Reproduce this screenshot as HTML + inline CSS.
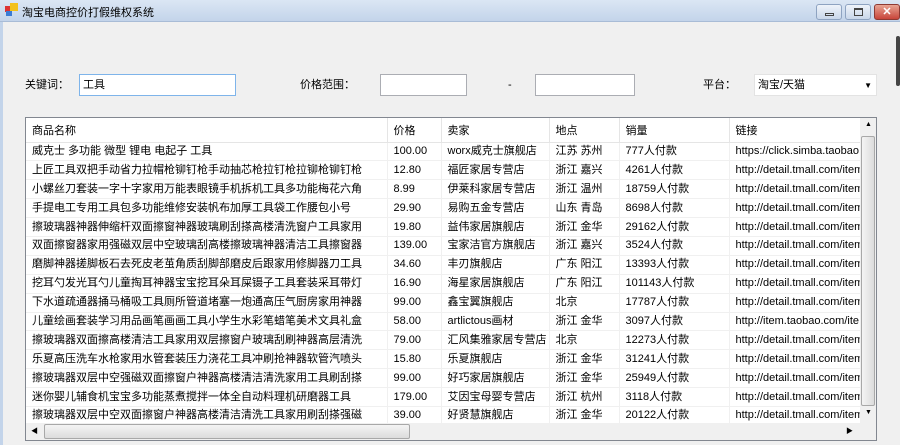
<!DOCTYPE html>
<html><head><meta charset="utf-8"><style>
*{margin:0;padding:0;box-sizing:border-box}
body{width:900px;height:445px;overflow:hidden;background:#f0f0f0;font-family:"Liberation Sans","Noto Sans CJK SC",sans-serif;font-size:11px;color:#000;position:relative}
.title{position:absolute;left:0;top:0;width:900px;height:22px;background:linear-gradient(#dbe6f4,#c3d4ea);border-bottom:1px solid #a9bcd6}
.title span{position:absolute;left:22px;top:4px;font-size:11px}
.lb{position:absolute;left:0;top:22px;width:3px;height:423px;background:#c3d4ea}
.btn{position:absolute;top:4px;height:16px;border:1px solid #8ea3c1;border-radius:3px;background:linear-gradient(#eef3fa,#c9d7ea)}
.lab{position:absolute;font-size:11px;line-height:14px}
.inp{position:absolute;background:#fff;border:1px solid #abadb3;line-height:14px}
table{border-collapse:collapse;table-layout:fixed}
td{height:18.9px;padding:0 0 0 6px;white-space:nowrap;overflow:hidden;border-right:1px solid #f0f0f0;border-bottom:1px solid #f0f0f0;font-size:11px;line-height:17px}
th{height:24px;font-weight:normal;text-align:left;padding-left:6px;border-right:1px solid #e5e5e5;border-bottom:1px solid #e5e5e5;font-size:11px}
</style></head><body>
<div class="title"><div style="position:absolute;left:5px;top:6px;width:6px;height:6px;background:#d33"></div><div style="position:absolute;left:10px;top:3px;width:8px;height:8px;background:#f3c11b"></div><div style="position:absolute;left:6px;top:11px;width:6px;height:5px;background:#3a7bd5"></div><span>淘宝电商控价打假维权系统</span>
<div class="btn" style="left:816px;width:26px"><div style="position:absolute;left:8px;top:8px;width:9px;height:3px;border:1px solid #444"></div></div>
<div class="btn" style="left:845px;width:26px"><div style="position:absolute;left:8px;top:3px;width:9px;height:8px;border:1px solid #444;border-top-width:2px"></div></div>
<div class="btn" style="left:874px;width:26px;background:linear-gradient(#e8a493,#c8453a);border-color:#8e3a33;color:#fff;text-align:center;font-weight:bold;line-height:14px">✕</div>
</div>
<div class="lb"></div>
<div style="position:absolute;right:0;top:36px;width:4px;height:50px;background:#444;border-radius:2px"></div>
<div class="lab" style="left:25px;top:78px">关键词：</div>
<div class="inp" style="left:79px;top:74px;width:157px;height:22px;border-color:#7eb4ea"><span style="position:absolute;left:3px;top:3px">工具</span></div>
<div class="lab" style="left:300px;top:78px">价格范围：</div>
<div class="inp" style="left:380px;top:74px;width:87px;height:22px"></div>
<div class="lab" style="left:508px;top:78px">-</div>
<div class="inp" style="left:535px;top:74px;width:100px;height:22px"></div>
<div class="lab" style="left:703px;top:78px">平台：</div>
<div class="inp" style="left:754px;top:74px;width:123px;height:22px;border-color:#e3e3e3"><span style="position:absolute;left:3px;top:3px">淘宝/天猫</span><span style="position:absolute;right:4px;top:4px;font-size:8px">▼</span></div>
<div style="position:absolute;left:25px;top:117px;width:852px;height:324px;background:#fff;border:1px solid #828790;overflow:hidden">
<table style="width:834px;position:absolute;left:0;top:0">
<colgroup><col style="width:361px"><col style="width:54px"><col style="width:108px"><col style="width:70px"><col style="width:110px"><col style="width:131px"></colgroup>
<tr><th>商品名称</th><th>价格</th><th>卖家</th><th>地点</th><th>销量</th><th>链接</th></tr>
<tr><td>威克士 多功能 微型 锂电 电起子 工具</td><td>100.00</td><td>worx威克士旗舰店</td><td>江苏 苏州</td><td>777人付款</td><td>https://click.simba.taobao</td></tr>
<tr><td>上匠工具双把手动省力拉帽枪铆钉枪手动抽芯枪拉钉枪拉铆枪铆钉枪</td><td>12.80</td><td>福匠家居专营店</td><td>浙江 嘉兴</td><td>4261人付款</td><td>http://detail.tmall.com/item</td></tr>
<tr><td>小螺丝刀套装一字十字家用万能表眼镜手机拆机工具多功能梅花六角</td><td>8.99</td><td>伊莱科家居专营店</td><td>浙江 温州</td><td>18759人付款</td><td>http://detail.tmall.com/item</td></tr>
<tr><td>手提电工专用工具包多功能维修安装帆布加厚工具袋工作腰包小号</td><td>29.90</td><td>易购五金专营店</td><td>山东 青岛</td><td>8698人付款</td><td>http://detail.tmall.com/item</td></tr>
<tr><td>擦玻璃器神器伸缩杆双面擦窗神器玻璃刷刮搽高楼清洗窗户工具家用</td><td>19.80</td><td>益伟家居旗舰店</td><td>浙江 金华</td><td>29162人付款</td><td>http://detail.tmall.com/item</td></tr>
<tr><td>双面擦窗器家用强磁双层中空玻璃刮高楼擦玻璃神器清洁工具擦窗器</td><td>139.00</td><td>宝家洁官方旗舰店</td><td>浙江 嘉兴</td><td>3524人付款</td><td>http://detail.tmall.com/item</td></tr>
<tr><td>磨脚神器搓脚板石去死皮老茧角质刮脚部磨皮后跟家用修脚器刀工具</td><td>34.60</td><td>丰刃旗舰店</td><td>广东 阳江</td><td>13393人付款</td><td>http://detail.tmall.com/item</td></tr>
<tr><td>挖耳勺发光耳勺儿童掏耳神器宝宝挖耳朵耳屎镊子工具套装采耳带灯</td><td>16.90</td><td>海星家居旗舰店</td><td>广东 阳江</td><td>101143人付款</td><td>http://detail.tmall.com/item</td></tr>
<tr><td>下水道疏通器捅马桶吸工具厕所管道堵塞一炮通高压气厨房家用神器</td><td>99.00</td><td>鑫宝翼旗舰店</td><td>北京</td><td>17787人付款</td><td>http://detail.tmall.com/item</td></tr>
<tr><td>儿童绘画套装学习用品画笔画画工具小学生水彩笔蜡笔美术文具礼盒</td><td>58.00</td><td>artlictous画材</td><td>浙江 金华</td><td>3097人付款</td><td>http://item.taobao.com/ite</td></tr>
<tr><td>擦玻璃器双面擦高楼清洁工具家用双层擦窗户玻璃刮刷神器高层清洗</td><td>79.00</td><td>汇风集雅家居专营店</td><td>北京</td><td>12273人付款</td><td>http://detail.tmall.com/item</td></tr>
<tr><td>乐夏高压洗车水枪家用水管套装压力浇花工具冲刷抢神器软管汽喷头</td><td>15.80</td><td>乐夏旗舰店</td><td>浙江 金华</td><td>31241人付款</td><td>http://detail.tmall.com/item</td></tr>
<tr><td>擦玻璃器双层中空强磁双面擦窗户神器高楼清洁清洗家用工具刷刮搽</td><td>99.00</td><td>好巧家居旗舰店</td><td>浙江 金华</td><td>25949人付款</td><td>http://detail.tmall.com/item</td></tr>
<tr><td>迷你婴儿辅食机宝宝多功能蒸煮搅拌一体全自动料理机研磨器工具</td><td>179.00</td><td>艾因宝母婴专营店</td><td>浙江 杭州</td><td>3118人付款</td><td>http://detail.tmall.com/item</td></tr>
<tr><td>擦玻璃器双层中空双面擦窗户神器高楼清洁清洗工具家用刷刮搽强磁</td><td>39.00</td><td>好贤慧旗舰店</td><td>浙江 金华</td><td>20122人付款</td><td>http://detail.tmall.com/item</td></tr>
</table>
<div style="position:absolute;left:834px;top:0;width:17px;height:305px;background:#f0f0f0"><div style="position:absolute;left:1px;top:18px;width:14px;height:270px;border:1px solid #a8a8a8;border-radius:2px;background:linear-gradient(90deg,#f4f4f4,#dcdcdc)"></div><span style="position:absolute;left:5px;top:3px;font-size:7px">▲</span><span style="position:absolute;left:5px;top:291px;font-size:7px">▼</span></div>
<div style="position:absolute;left:0;top:305px;width:851px;height:17px;background:#f0f0f0"><div style="position:absolute;left:18px;top:1px;width:366px;height:15px;border:1px solid #a8a8a8;border-radius:2px;background:linear-gradient(#f4f4f4,#dcdcdc)"></div><span style="position:absolute;left:5px;top:3px;font-size:7px">◀</span><span style="position:absolute;left:820px;top:3px;font-size:7px">▶</span></div>
</div>
</body></html>
